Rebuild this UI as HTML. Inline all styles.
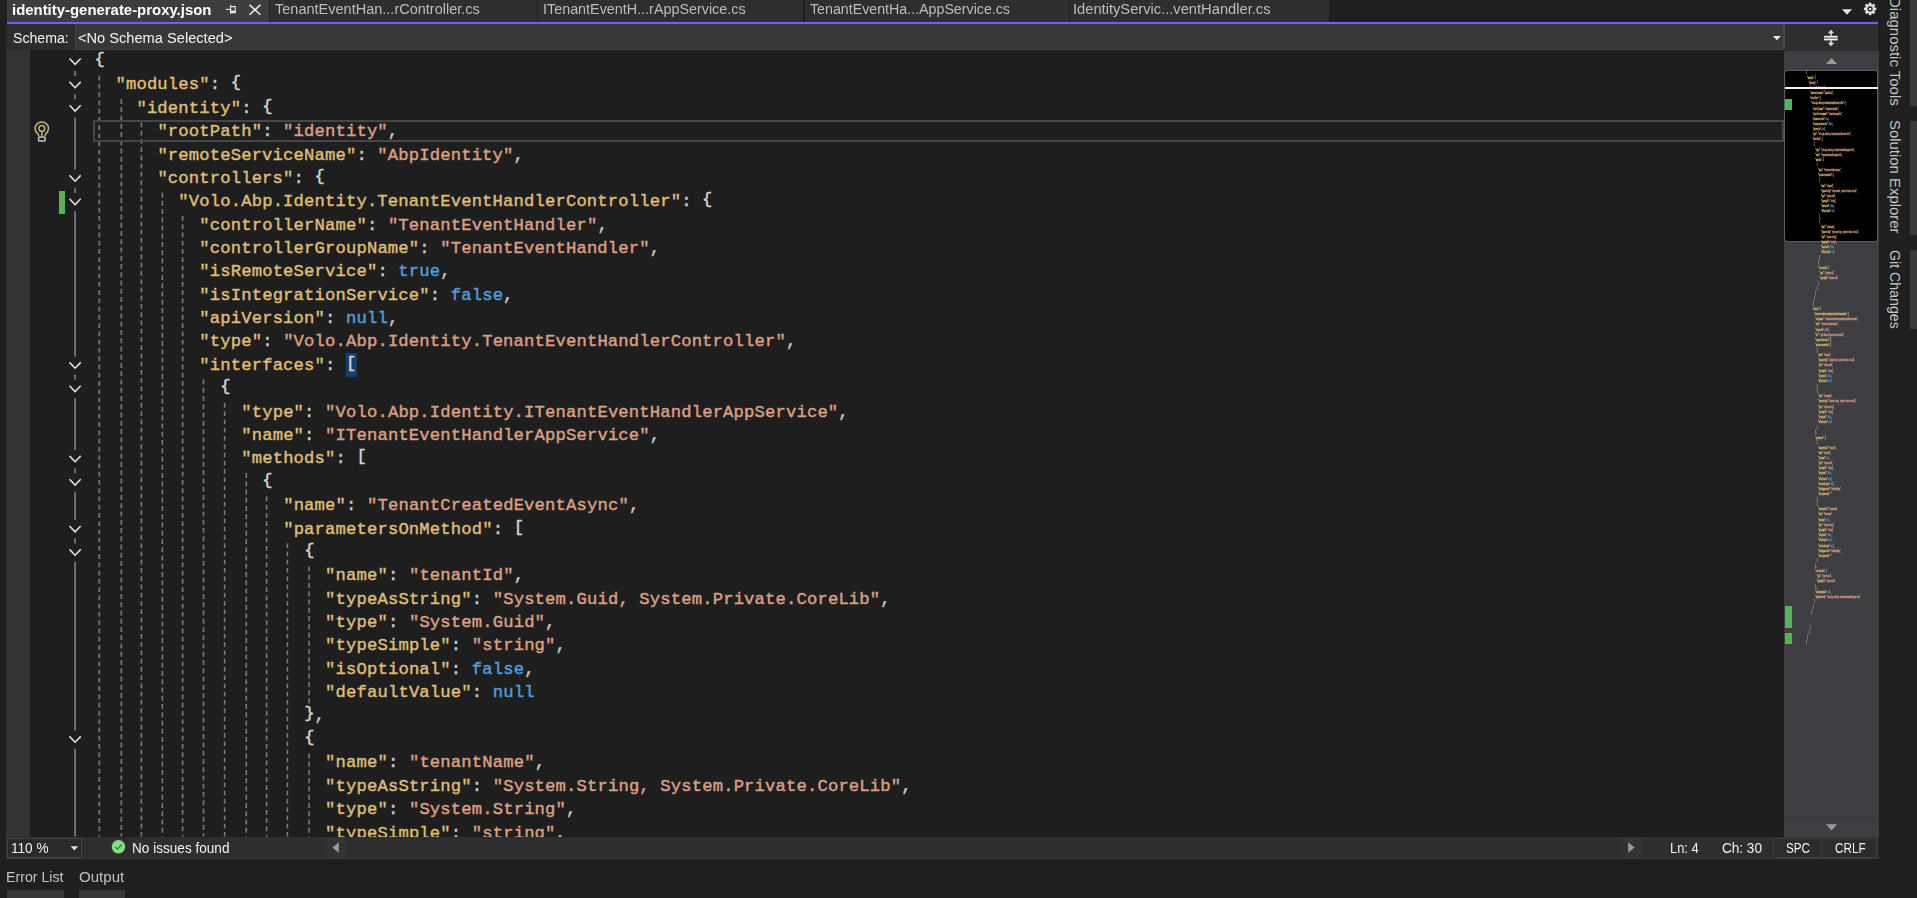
<!DOCTYPE html>
<html lang="en"><head><meta charset="utf-8">
<title>identity-generate-proxy.json - Microsoft Visual Studio</title>
<style>
html,body{margin:0;padding:0;background:#1f1f1f;}
body{width:1917px;height:898px;position:relative;overflow:hidden;font-family:"Liberation Sans",sans-serif;font-size:15.2px;color:#f0f0f0;}
.a{position:absolute;}
.t{position:absolute;white-space:pre;line-height:20px;height:20px;}
.code{position:absolute;left:0;white-space:pre;font-family:"Liberation Mono", monospace;font-size:17.2px;letter-spacing:0.16032031249999967px;height:23px;line-height:23px;color:#d2d2d2;-webkit-text-stroke:0.45px currentColor;}
.k{color:#ddbb78;}
.s{color:#d99f84;}
.w{color:#559bd8;}
.p{color:#c9c9c9;}
.b{color:#d4d4d4;position:relative;top:-2.3px;}
.bm{background:#123e70;}
.mm{font-family:"Liberation Mono", monospace;font-size:17.2px;letter-spacing:0.16032031249999967px;color:#d2d2d2;white-space:pre;opacity:1.0;-webkit-text-stroke:1.6px currentColor;}
.ml{height:23.375px;line-height:23.375px;}
svg{position:absolute;overflow:visible;}
.vt{position:absolute;white-space:pre;line-height:20px;height:20px;transform-origin:0 0;transform:rotate(90deg);color:#c6c6c6;}
</style></head><body>
<div class="a" style="left:6.90px;top:0.00px;width:1322.60px;height:22.00px;background:#2e2e2e;"></div>
<div class="a" style="left:6.90px;top:0.00px;width:262.10px;height:22.00px;background:#3d3d3d;"></div>
<div class="a" style="left:269.00px;top:0.00px;width:1.20px;height:22.00px;background:#1f1f1f;"></div>
<div class="a" style="left:537.00px;top:0.00px;width:1.20px;height:22.00px;background:#1f1f1f;"></div>
<div class="a" style="left:803.40px;top:0.00px;width:1.20px;height:22.00px;background:#1f1f1f;"></div>
<div class="a" style="left:1069.00px;top:0.00px;width:1.20px;height:22.00px;background:#1f1f1f;"></div>
<div class="a" style="left:6.90px;top:21.70px;width:1871.40px;height:2.60px;background:#7160e8;"></div>
<span class="t" id="tab1" style="left:12.31px;top:0.40px;color:#ffffff;font-size:15.3px;transform-origin:0 0;transform:scaleX(0.9749);font-weight:bold;">identity-generate-proxy.json</span>
<span class="t" id="tab2" style="left:275.18px;top:-1.37px;color:#bdbdbd;font-size:15.2px;transform-origin:0 0;transform:scaleX(0.9554);">TenantEventHan...rController.cs</span>
<span class="t" id="tab3" style="left:542.96px;top:-1.37px;color:#bdbdbd;font-size:15.2px;transform-origin:0 0;transform:scaleX(0.9450);">ITenantEventH...rAppService.cs</span>
<span class="t" id="tab4" style="left:810.36px;top:-1.37px;color:#bdbdbd;font-size:15.2px;transform-origin:0 0;transform:scaleX(0.9363);">TenantEventHa...AppService.cs</span>
<span class="t" id="tab5" style="left:1073.23px;top:-1.37px;color:#bdbdbd;font-size:15.2px;transform-origin:0 0;transform:scaleX(0.9667);">IdentityServic...ventHandler.cs</span>
<svg style="left:225px;top:3px" width="14" height="14" viewBox="0 0 14 14"><g fill="none" stroke="#e6e6e6" stroke-width="1.1">
<path d="M0.8 6.4H5.4"/><path d="M5.6 1.7V11"/><path d="M6 3.6H10.3V9.6H6"/><path d="M6 8.6H10.3" stroke-width="2"/></g></svg>
<svg style="left:249px;top:4px" width="12" height="12" viewBox="0 0 12 12"><path d="M0.5 0.9L11.4 10.7M11.4 0.9L0.5 10.7" fill="none" stroke="#ececec" stroke-width="1.5"/></svg>
<svg style="left:1842px;top:9px" width="10" height="6" viewBox="0 0 10 6"><g transform="translate(0.00 0.20)"><path d="M0 0H10L5 5.6Z" fill="#e4e4e4"/></g></svg>
<svg style="left:1870px;top:8px" width="1" height="1"><g transform="translate(0.10 0.90)"><g fill="#e4e4e4"><rect x="-1.35" y="-6.2" width="2.7" height="3" transform="rotate(0)"/><rect x="-1.35" y="-6.2" width="2.7" height="3" transform="rotate(45)"/><rect x="-1.35" y="-6.2" width="2.7" height="3" transform="rotate(90)"/><rect x="-1.35" y="-6.2" width="2.7" height="3" transform="rotate(135)"/><rect x="-1.35" y="-6.2" width="2.7" height="3" transform="rotate(180)"/><rect x="-1.35" y="-6.2" width="2.7" height="3" transform="rotate(225)"/><rect x="-1.35" y="-6.2" width="2.7" height="3" transform="rotate(270)"/><rect x="-1.35" y="-6.2" width="2.7" height="3" transform="rotate(315)"/><path fill-rule="evenodd" d="M0 -4.6A4.6 4.6 0 1 1 0 4.6A4.6 4.6 0 1 1 0 -4.6ZM0 -2.6A2.6 2.6 0 1 0 0 2.6A2.6 2.6 0 1 0 0 -2.6Z"/><circle r="1.25"/></g></g></svg>
<div class="a" style="left:6.30px;top:24.30px;width:1778.30px;height:25.70px;background:#2c2c2c;"></div>
<div class="a" style="left:75.00px;top:24.30px;width:1710.00px;height:25.70px;background:#383838;box-sizing:border-box;border:1px solid #434343;border-top:none;border-right:2px solid #464646;"></div>
<span class="t" id="schema" style="left:13.03px;top:27.63px;color:#f2f2f2;font-size:15.2px;transform-origin:0 0;transform:scaleX(0.9310);">Schema:</span>
<span class="t" id="noschema" style="left:78.25px;top:27.63px;color:#f2f2f2;font-size:15.2px;transform-origin:0 0;transform:scaleX(0.9628);">&lt;No Schema Selected&gt;</span>
<svg style="left:1772px;top:35px" width="8" height="5" viewBox="0 0 8 5"><g transform="translate(0.90 0.90)"><path d="M0 0H8L4 4.4Z" fill="#e8e8e8"/></g></svg>
<div class="a" style="left:1785.00px;top:24.30px;width:93.20px;height:26.40px;background:#2e2e2e;"></div>
<svg style="left:1823px;top:29px" width="15" height="17" viewBox="0 0 15 17"><g transform="translate(0.50 0.60)">
<path d="M7.5 0.2L10.7 3.6H8.3V6.2H6.7V3.6H4.3Z" fill="#dcdcdc"/>
<path d="M7.5 16.6L10.7 13.2H8.3V10.6H6.7V13.2H4.3Z" fill="#dcdcdc"/>
<rect x="0.5" y="6.3" width="13.6" height="4.4" fill="#8a8a8a"/>
<rect x="0.5" y="6.3" width="13.6" height="1.3" fill="#f0f0f0"/><rect x="0.5" y="9.4" width="13.6" height="1.3" fill="#f0f0f0"/></g></svg>
<div class="a" style="left:6.30px;top:50.00px;width:1778.30px;height:786.60px;background:#1e1e1e;"></div>
<div class="a" style="left:6.30px;top:50.00px;width:23.80px;height:786.60px;background:#333333;"></div>
<svg style="left:0;top:0" width="1917" height="898"><g fill="none" stroke="#7a7a7a" stroke-width="1.6" stroke-dasharray="4.9 3.3499999999999996"><path d="M99.30 75.67V836.60"/><path d="M121.30 99.05V836.60"/><path d="M141.40 122.42V836.60"/><path d="M162.40 192.55V836.60"/><path d="M182.60 215.93V836.60"/><path d="M203.50 379.55V836.60"/><path d="M224.60 402.93V836.60"/><path d="M246.30 473.05V836.60"/><path d="M266.60 496.43V836.60"/><path d="M287.40 543.17V836.60"/><path d="M309.10 566.55V704.60"/><path d="M309.10 753.55V836.60"/></g></svg>
<div class="a" style="left:93.00px;top:119.80px;width:1691.20px;height:22.10px;background:transparent;box-sizing:border-box;border:2.4px solid #464646;"></div>
<svg style="left:0;top:0" width="1917" height="898"><g fill="none"><path d="M69.50 58.50L75.10 64.30L80.70 58.50" stroke="#e4e4e4" stroke-width="1.5"/><path d="M69.50 81.88L75.10 87.67L80.70 81.88" stroke="#e4e4e4" stroke-width="1.5"/><path d="M75.10 70.90V75.98" stroke="#7c7c7c" stroke-width="1.7"/><path d="M69.50 105.25L75.10 111.05L80.70 105.25" stroke="#e4e4e4" stroke-width="1.5"/><path d="M75.10 94.28V99.35" stroke="#7c7c7c" stroke-width="1.7"/><path d="M69.50 175.38L75.10 181.18L80.70 175.38" stroke="#e4e4e4" stroke-width="1.5"/><path d="M75.10 117.65V169.48" stroke="#7c7c7c" stroke-width="1.7"/><path d="M69.50 198.75L75.10 204.55L80.70 198.75" stroke="#e4e4e4" stroke-width="1.5"/><path d="M75.10 187.78V192.85" stroke="#7c7c7c" stroke-width="1.7"/><path d="M69.50 362.38L75.10 368.18L80.70 362.38" stroke="#e4e4e4" stroke-width="1.5"/><path d="M75.10 211.15V356.47" stroke="#7c7c7c" stroke-width="1.7"/><path d="M69.50 385.75L75.10 391.55L80.70 385.75" stroke="#e4e4e4" stroke-width="1.5"/><path d="M75.10 374.77V379.85" stroke="#7c7c7c" stroke-width="1.7"/><path d="M69.50 455.88L75.10 461.68L80.70 455.88" stroke="#e4e4e4" stroke-width="1.5"/><path d="M75.10 398.15V449.97" stroke="#7c7c7c" stroke-width="1.7"/><path d="M69.50 479.25L75.10 485.05L80.70 479.25" stroke="#e4e4e4" stroke-width="1.5"/><path d="M75.10 468.27V473.35" stroke="#7c7c7c" stroke-width="1.7"/><path d="M69.50 526.00L75.10 531.80L80.70 526.00" stroke="#e4e4e4" stroke-width="1.5"/><path d="M75.10 491.65V520.10" stroke="#7c7c7c" stroke-width="1.7"/><path d="M69.50 549.37L75.10 555.17L80.70 549.37" stroke="#e4e4e4" stroke-width="1.5"/><path d="M75.10 538.40V543.47" stroke="#7c7c7c" stroke-width="1.7"/><path d="M69.50 736.37L75.10 742.17L80.70 736.37" stroke="#e4e4e4" stroke-width="1.5"/><path d="M75.10 561.77V730.47" stroke="#7c7c7c" stroke-width="1.7"/><path d="M75.10 748.77V836.60" stroke="#7c7c7c" stroke-width="1.7"/></g></svg>
<div class="a" style="left:59.00px;top:191.00px;width:6.00px;height:23.00px;background:#57b35a;"></div>
<svg style="left:33px;top:119px" width="18" height="24" viewBox="0 0 18 24"><g fill="none" stroke-width="1.5">
<path d="M5.6 17.2V15.8C3.3 13.8 2.1 11.8 2.1 9.5A6.7 6.5 0 0 1 15.5 9.5C15.5 11.8 14.3 13.8 12 15.8V17.2" stroke="#c5ad72"/>
<circle cx="8.8" cy="9.4" r="2.9" stroke="#c5ad72"/><path d="M8.8 12.3V17.2" stroke="#c5ad72"/>
<rect x="5.6" y="17.9" width="6.5" height="4.2" rx="0.8" stroke="#c4c4c4"/></g></svg>
<div class="a" style="left:345.90px;top:353.10px;width:11.00px;height:23.70px;background:#123e70;"></div>
<div class="code" id="L1" style="top:50px;padding-left:94.50px;"><span class="b">{</span></div>
<div class="code" id="L2" style="top:73px;padding-left:115.46px;"><span class="k">"modules"</span><span class="p">:</span> <span class="b">{</span></div>
<div class="code" id="L3" style="top:97px;padding-left:136.43px;"><span class="k">"identity"</span><span class="p">:</span> <span class="b">{</span></div>
<div class="code" id="L4" style="top:120px;padding-left:157.39px;"><span class="k">"rootPath"</span><span class="p">:</span> <span class="s">"identity"</span><span class="p">,</span></div>
<div class="code" id="L5" style="top:144px;padding-left:157.39px;"><span class="k">"remoteServiceName"</span><span class="p">:</span> <span class="s">"AbpIdentity"</span><span class="p">,</span></div>
<div class="code" id="L6" style="top:167px;padding-left:157.39px;"><span class="k">"controllers"</span><span class="p">:</span> <span class="b">{</span></div>
<div class="code" id="L7" style="top:190px;padding-left:178.36px;"><span class="k">"Volo.Abp.Identity.TenantEventHandlerController"</span><span class="p">:</span> <span class="b">{</span></div>
<div class="code" id="L8" style="top:214px;padding-left:199.32px;"><span class="k">"controllerName"</span><span class="p">:</span> <span class="s">"TenantEventHandler"</span><span class="p">,</span></div>
<div class="code" id="L9" style="top:237px;padding-left:199.32px;"><span class="k">"controllerGroupName"</span><span class="p">:</span> <span class="s">"TenantEventHandler"</span><span class="p">,</span></div>
<div class="code" id="L10" style="top:260px;padding-left:199.32px;"><span class="k">"isRemoteService"</span><span class="p">:</span> <span class="w">true</span><span class="p">,</span></div>
<div class="code" id="L11" style="top:284px;padding-left:199.32px;"><span class="k">"isIntegrationService"</span><span class="p">:</span> <span class="w">false</span><span class="p">,</span></div>
<div class="code" id="L12" style="top:307px;padding-left:199.32px;"><span class="k">"apiVersion"</span><span class="p">:</span> <span class="w">null</span><span class="p">,</span></div>
<div class="code" id="L13" style="top:330px;padding-left:199.32px;"><span class="k">"type"</span><span class="p">:</span> <span class="s">"Volo.Abp.Identity.TenantEventHandlerController"</span><span class="p">,</span></div>
<div class="code" id="L14" style="top:354px;padding-left:199.32px;"><span class="k">"interfaces"</span><span class="p">:</span> <span class="b">[</span></div>
<div class="code" id="L15" style="top:377px;padding-left:220.28px;"><span class="b">{</span></div>
<div class="code" id="L16" style="top:401px;padding-left:241.25px;"><span class="k">"type"</span><span class="p">:</span> <span class="s">"Volo.Abp.Identity.ITenantEventHandlerAppService"</span><span class="p">,</span></div>
<div class="code" id="L17" style="top:424px;padding-left:241.25px;"><span class="k">"name"</span><span class="p">:</span> <span class="s">"ITenantEventHandlerAppService"</span><span class="p">,</span></div>
<div class="code" id="L18" style="top:447px;padding-left:241.25px;"><span class="k">"methods"</span><span class="p">:</span> <span class="b">[</span></div>
<div class="code" id="L19" style="top:471px;padding-left:262.21px;"><span class="b">{</span></div>
<div class="code" id="L20" style="top:494px;padding-left:283.18px;"><span class="k">"name"</span><span class="p">:</span> <span class="s">"TenantCreatedEventAsync"</span><span class="p">,</span></div>
<div class="code" id="L21" style="top:518px;padding-left:283.18px;"><span class="k">"parametersOnMethod"</span><span class="p">:</span> <span class="b">[</span></div>
<div class="code" id="L22" style="top:541px;padding-left:304.14px;"><span class="b">{</span></div>
<div class="code" id="L23" style="top:564px;padding-left:325.10px;"><span class="k">"name"</span><span class="p">:</span> <span class="s">"tenantId"</span><span class="p">,</span></div>
<div class="code" id="L24" style="top:588px;padding-left:325.10px;"><span class="k">"typeAsString"</span><span class="p">:</span> <span class="s">"System.Guid, System.Private.CoreLib"</span><span class="p">,</span></div>
<div class="code" id="L25" style="top:611px;padding-left:325.10px;"><span class="k">"type"</span><span class="p">:</span> <span class="s">"System.Guid"</span><span class="p">,</span></div>
<div class="code" id="L26" style="top:634px;padding-left:325.10px;"><span class="k">"typeSimple"</span><span class="p">:</span> <span class="s">"string"</span><span class="p">,</span></div>
<div class="code" id="L27" style="top:658px;padding-left:325.10px;"><span class="k">"isOptional"</span><span class="p">:</span> <span class="w">false</span><span class="p">,</span></div>
<div class="code" id="L28" style="top:681px;padding-left:325.10px;"><span class="k">"defaultValue"</span><span class="p">:</span> <span class="w">null</span></div>
<div class="code" id="L29" style="top:704px;padding-left:304.14px;"><span class="b">}</span><span class="p">,</span></div>
<div class="code" id="L30" style="top:728px;padding-left:304.14px;"><span class="b">{</span></div>
<div class="code" id="L31" style="top:751px;padding-left:325.10px;"><span class="k">"name"</span><span class="p">:</span> <span class="s">"tenantName"</span><span class="p">,</span></div>
<div class="code" id="L32" style="top:775px;padding-left:325.10px;"><span class="k">"typeAsString"</span><span class="p">:</span> <span class="s">"System.String, System.Private.CoreLib"</span><span class="p">,</span></div>
<div class="code" id="L33" style="top:798px;padding-left:325.10px;"><span class="k">"type"</span><span class="p">:</span> <span class="s">"System.String"</span><span class="p">,</span></div>
<div class="code" id="L34" style="top:822px;padding-left:325.10px;"><span class="k">"typeSimple"</span><span class="p">:</span> <span class="s">"string"</span><span class="p">,</span></div>
<div class="a" style="left:1784.20px;top:50.70px;width:94.50px;height:785.90px;background:#3e3e42;"></div>
<svg style="left:1825px;top:57px" width="12" height="7" viewBox="0 0 12 7"><g transform="translate(0.80 0.90)"><path d="M0 6.2H11.4L5.7 0Z" fill="#999999"/></g></svg>
<svg style="left:1825px;top:824px" width="12" height="7" viewBox="0 0 12 7"><g transform="translate(0.80 0.20)"><path d="M0 0H11.4L5.7 6.2Z" fill="#999999"/></g></svg>
<div class="a" style="left:1784.20px;top:817.00px;width:94.50px;height:1.00px;background:#35353a;"></div>
<div class="a" style="left:1784.30px;top:70.10px;width:93.80px;height:171.80px;background:#000000;box-sizing:border-box;border:1px solid #5e5e5e;border-radius:3.5px;"></div>
<div class="a" style="left:1784.20px;top:50px;width:94.50px;height:770px;overflow:hidden;filter:blur(0.55px);"><div class="a mm" style="left:21.80px;top:19.62px;transform-origin:0 0;transform:scale(0.06487,0.21989);"><div class="ml"><span class="b">{</span></div><div class="ml">  <span class="k">"modules"</span><span class="p">:</span> <span class="b">{</span></div><div class="ml">    <span class="k">"identity"</span><span class="p">:</span> <span class="b">{</span></div><div class="ml">      <span class="k">"rootPath"</span><span class="p">:</span> <span class="s">"identity"</span><span class="p">,</span></div><div class="ml">      <span class="k">"remoteServiceName"</span><span class="p">:</span> <span class="s">"AbpIdentity"</span><span class="p">,</span></div><div class="ml">      <span class="k">"controllers"</span><span class="p">:</span> <span class="b">{</span></div><div class="ml">        <span class="k">"Volo.Abp.Identity.TenantEventHandlerController"</span><span class="p">:</span> <span class="b">{</span></div><div class="ml">          <span class="k">"controllerName"</span><span class="p">:</span> <span class="s">"TenantEventHandler"</span><span class="p">,</span></div><div class="ml">          <span class="k">"controllerGroupName"</span><span class="p">:</span> <span class="s">"TenantEventHandler"</span><span class="p">,</span></div><div class="ml">          <span class="k">"isRemoteService"</span><span class="p">:</span> <span class="w">true</span><span class="p">,</span></div><div class="ml">          <span class="k">"isIntegrationService"</span><span class="p">:</span> <span class="w">false</span><span class="p">,</span></div><div class="ml">          <span class="k">"apiVersion"</span><span class="p">:</span> <span class="w">null</span><span class="p">,</span></div><div class="ml">          <span class="k">"type"</span><span class="p">:</span> <span class="s">"Volo.Abp.Identity.TenantEventHandlerController"</span><span class="p">,</span></div><div class="ml">          <span class="k">"interfaces"</span><span class="p">:</span> <span class="b">[</span></div><div class="ml">            <span class="b">{</span></div><div class="ml">              <span class="k">"type"</span><span class="p">:</span> <span class="s">"Volo.Abp.Identity.ITenantEventHandlerAppService"</span><span class="p">,</span></div><div class="ml">              <span class="k">"name"</span><span class="p">:</span> <span class="s">"ITenantEventHandlerAppService"</span><span class="p">,</span></div><div class="ml">              <span class="k">"methods"</span><span class="p">:</span> <span class="b">[</span></div><div class="ml">                <span class="b">{</span></div><div class="ml">                  <span class="k">"name"</span><span class="p">:</span> <span class="s">"TenantCreatedEventAsync"</span><span class="p">,</span></div><div class="ml">                  <span class="k">"parametersOnMethod"</span><span class="p">:</span> <span class="b">[</span></div><div class="ml">                    <span class="b">{</span></div><div class="ml">                      <span class="k">"name"</span><span class="p">:</span> <span class="s">"tenantId"</span><span class="p">,</span></div><div class="ml">                      <span class="k">"typeAsString"</span><span class="p">:</span> <span class="s">"System.Guid, System.Private.CoreLib"</span><span class="p">,</span></div><div class="ml">                      <span class="k">"type"</span><span class="p">:</span> <span class="s">"System.Guid"</span><span class="p">,</span></div><div class="ml">                      <span class="k">"typeSimple"</span><span class="p">:</span> <span class="s">"string"</span><span class="p">,</span></div><div class="ml">                      <span class="k">"isOptional"</span><span class="p">:</span> <span class="w">false</span><span class="p">,</span></div><div class="ml">                      <span class="k">"defaultValue"</span><span class="p">:</span> <span class="w">null</span></div><div class="ml">                    <span class="b">}</span><span class="p">,</span></div><div class="ml">                    <span class="b">{</span></div><div class="ml">                      <span class="k">"name"</span><span class="p">:</span> <span class="s">"tenantName"</span><span class="p">,</span></div><div class="ml">                      <span class="k">"typeAsString"</span><span class="p">:</span> <span class="s">"System.String, System.Private.CoreLib"</span><span class="p">,</span></div><div class="ml">                      <span class="k">"type"</span><span class="p">:</span> <span class="s">"System.String"</span><span class="p">,</span></div><div class="ml">                      <span class="k">"typeSimple"</span><span class="p">:</span> <span class="s">"string"</span><span class="p">,</span></div><div class="ml">                      <span class="k">"isOptional"</span><span class="p">:</span> <span class="w">false</span><span class="p">,</span></div><div class="ml">                      <span class="k">"defaultValue"</span><span class="p">:</span> <span class="w">null</span></div><div class="ml">                    <span class="b">}</span></div><div class="ml">                  <span class="b">]</span><span class="p">,</span></div><div class="ml">                  <span class="k">"returnValue"</span><span class="p">:</span> <span class="b">{</span></div><div class="ml">                    <span class="k">"type"</span><span class="p">:</span> <span class="s">"System.Void"</span><span class="p">,</span></div><div class="ml">                    <span class="k">"typeSimple"</span><span class="p">:</span> <span class="s">"System.Void"</span></div><div class="ml">                  <span class="b">}</span></div><div class="ml">                <span class="b">}</span></div><div class="ml">              <span class="b">]</span></div><div class="ml">            <span class="b">}</span></div><div class="ml">          <span class="b">]</span><span class="p">,</span></div><div class="ml">          <span class="k">"actions"</span><span class="p">:</span> <span class="b">{</span></div><div class="ml">            <span class="k">"TenantCreatedEventAsyncByTenantIdAndTenantName"</span><span class="p">:</span> <span class="b">{</span></div><div class="ml">              <span class="k">"uniqueName"</span><span class="p">:</span> <span class="s">"TenantCreatedEventAsyncByTenantIdAndTenantName"</span><span class="p">,</span></div><div class="ml">              <span class="k">"name"</span><span class="p">:</span> <span class="s">"TenantCreatedEventAsync"</span><span class="p">,</span></div><div class="ml">              <span class="k">"httpMethod"</span><span class="p">:</span> <span class="s">"POST"</span><span class="p">,</span></div><div class="ml">              <span class="k">"url"</span><span class="p">:</span> <span class="s">"api/identity/tenant-event-handler"</span><span class="p">,</span></div><div class="ml">              <span class="k">"supportedVersions"</span><span class="p">:</span> <span class="b">[</span><span class="b">]</span><span class="p">,</span></div><div class="ml">              <span class="k">"parametersOnMethod"</span><span class="p">:</span> <span class="b">[</span></div><div class="ml">                <span class="b">{</span></div><div class="ml">                  <span class="k">"name"</span><span class="p">:</span> <span class="s">"tenantId"</span><span class="p">,</span></div><div class="ml">                  <span class="k">"typeAsString"</span><span class="p">:</span> <span class="s">"System.Guid, System.Private.CoreLib"</span><span class="p">,</span></div><div class="ml">                  <span class="k">"type"</span><span class="p">:</span> <span class="s">"System.Guid"</span><span class="p">,</span></div><div class="ml">                  <span class="k">"typeSimple"</span><span class="p">:</span> <span class="s">"string"</span><span class="p">,</span></div><div class="ml">                  <span class="k">"isOptional"</span><span class="p">:</span> <span class="w">false</span><span class="p">,</span></div><div class="ml">                  <span class="k">"defaultValue"</span><span class="p">:</span> <span class="w">null</span></div><div class="ml">                <span class="b">}</span><span class="p">,</span></div><div class="ml">                <span class="b">{</span></div><div class="ml">                  <span class="k">"name"</span><span class="p">:</span> <span class="s">"tenantName"</span><span class="p">,</span></div><div class="ml">                  <span class="k">"typeAsString"</span><span class="p">:</span> <span class="s">"System.String, System.Private.CoreLib"</span><span class="p">,</span></div><div class="ml">                  <span class="k">"type"</span><span class="p">:</span> <span class="s">"System.String"</span><span class="p">,</span></div><div class="ml">                  <span class="k">"typeSimple"</span><span class="p">:</span> <span class="s">"string"</span><span class="p">,</span></div><div class="ml">                  <span class="k">"isOptional"</span><span class="p">:</span> <span class="w">false</span><span class="p">,</span></div><div class="ml">                  <span class="k">"defaultValue"</span><span class="p">:</span> <span class="w">null</span></div><div class="ml">                <span class="b">}</span></div><div class="ml">              <span class="b">]</span><span class="p">,</span></div><div class="ml">              <span class="k">"parameters"</span><span class="p">:</span> <span class="b">[</span></div><div class="ml">                <span class="b">{</span></div><div class="ml">                  <span class="k">"nameOnMethod"</span><span class="p">:</span> <span class="s">"tenantId"</span><span class="p">,</span></div><div class="ml">                  <span class="k">"name"</span><span class="p">:</span> <span class="s">"tenantId"</span><span class="p">,</span></div><div class="ml">                  <span class="k">"jsonName"</span><span class="p">:</span> <span class="w">null</span><span class="p">,</span></div><div class="ml">                  <span class="k">"type"</span><span class="p">:</span> <span class="s">"System.Guid"</span><span class="p">,</span></div><div class="ml">                  <span class="k">"typeSimple"</span><span class="p">:</span> <span class="s">"string"</span><span class="p">,</span></div><div class="ml">                  <span class="k">"isOptional"</span><span class="p">:</span> <span class="w">false</span><span class="p">,</span></div><div class="ml">                  <span class="k">"defaultValue"</span><span class="p">:</span> <span class="w">null</span><span class="p">,</span></div><div class="ml">                  <span class="k">"constraintTypes"</span><span class="p">:</span> <span class="w">null</span><span class="p">,</span></div><div class="ml">                  <span class="k">"bindingSourceId"</span><span class="p">:</span> <span class="s">"ModelBinding"</span><span class="p">,</span></div><div class="ml">                  <span class="k">"descriptorName"</span><span class="p">:</span> <span class="s">""</span></div><div class="ml">                <span class="b">}</span><span class="p">,</span></div><div class="ml">                <span class="b">{</span></div><div class="ml">                  <span class="k">"nameOnMethod"</span><span class="p">:</span> <span class="s">"tenantName"</span><span class="p">,</span></div><div class="ml">                  <span class="k">"name"</span><span class="p">:</span> <span class="s">"tenantName"</span><span class="p">,</span></div><div class="ml">                  <span class="k">"jsonName"</span><span class="p">:</span> <span class="w">null</span><span class="p">,</span></div><div class="ml">                  <span class="k">"type"</span><span class="p">:</span> <span class="s">"System.String"</span><span class="p">,</span></div><div class="ml">                  <span class="k">"typeSimple"</span><span class="p">:</span> <span class="s">"string"</span><span class="p">,</span></div><div class="ml">                  <span class="k">"isOptional"</span><span class="p">:</span> <span class="w">false</span><span class="p">,</span></div><div class="ml">                  <span class="k">"defaultValue"</span><span class="p">:</span> <span class="w">null</span><span class="p">,</span></div><div class="ml">                  <span class="k">"constraintTypes"</span><span class="p">:</span> <span class="w">null</span><span class="p">,</span></div><div class="ml">                  <span class="k">"bindingSourceId"</span><span class="p">:</span> <span class="s">"ModelBinding"</span><span class="p">,</span></div><div class="ml">                  <span class="k">"descriptorName"</span><span class="p">:</span> <span class="s">""</span></div><div class="ml">                <span class="b">}</span></div><div class="ml">              <span class="b">]</span><span class="p">,</span></div><div class="ml">              <span class="k">"returnValue"</span><span class="p">:</span> <span class="b">{</span></div><div class="ml">                <span class="k">"type"</span><span class="p">:</span> <span class="s">"System.Void"</span><span class="p">,</span></div><div class="ml">                <span class="k">"typeSimple"</span><span class="p">:</span> <span class="s">"System.Void"</span></div><div class="ml">              <span class="b">}</span><span class="p">,</span></div><div class="ml">              <span class="k">"allowAnonymous"</span><span class="p">:</span> <span class="w">null</span><span class="p">,</span></div><div class="ml">              <span class="k">"implementFrom"</span><span class="p">:</span> <span class="s">"Volo.Abp.Identity.ITenantEventHandlerAppService"</span></div><div class="ml">            <span class="b">}</span></div><div class="ml">          <span class="b">}</span></div><div class="ml">        <span class="b">}</span></div><div class="ml"></div><div class="ml"></div><div class="ml">      <span class="b">}</span></div><div class="ml">    <span class="b">}</span></div><div class="ml">  <span class="b">}</span></div><div class="ml"><span class="b">}</span></div></div></div>
<div class="a" style="left:1784.70px;top:86.50px;width:93.80px;height:2.40px;background:#f2f2f2;"></div>
<div class="a" style="left:1784.80px;top:98.90px;width:7.10px;height:11.10px;background:#57b35a;"></div>
<div class="a" style="left:1784.80px;top:606.00px;width:7.10px;height:21.70px;background:#57b35a;"></div>
<div class="a" style="left:1784.80px;top:632.60px;width:7.10px;height:11.40px;background:#57b35a;"></div>
<div class="a" style="left:6.30px;top:836.60px;width:1872.40px;height:22.00px;background:#2e2e2e;box-sizing:border-box;border-bottom:1px solid #3a3a3a;"></div>
<div class="a" style="left:7.20px;top:837.60px;width:74.50px;height:20.20px;background:#2a2a2a;box-sizing:border-box;border:1px solid #434343;"></div>
<span class="t" id="zoom" style="left:10.69px;top:837.93px;color:#f2f2f2;font-size:15.2px;transform-origin:0 0;transform:scaleX(0.8958);">110 %</span>
<svg style="left:70px;top:846px" width="8" height="5" viewBox="0 0 8 5"><g transform="translate(0.60 0.20)"><path d="M0 0H7.6L3.8 4.2Z" fill="#e0e0e0"/></g></svg>
<svg style="left:118px;top:846px" width="1" height="1"><g transform="translate(0.47 0.83)"><circle cx="0" cy="0" r="6.75" fill="#84dc86"/>
<path d="M-3.44 0.16L-1.1 2.2L3.29 -2.35" fill="none" stroke="#3b8443" stroke-width="1.3"/></g></svg>
<span class="t" id="noissues" style="left:131.88px;top:837.93px;color:#f2f2f2;font-size:15.2px;transform-origin:0 0;transform:scaleX(0.8950);">No issues found</span>
<div class="a" style="left:325.00px;top:836.80px;width:20.80px;height:21.00px;background:#333333;"></div>
<div class="a" style="left:1621.20px;top:836.80px;width:20.80px;height:21.00px;background:#333333;"></div>
<svg style="left:332px;top:842px" width="7" height="11" viewBox="0 0 7 11"><g transform="translate(0.40 0.20)"><path d="M6.4 0V10.6L0 5.3Z" fill="#999999"/></g></svg>
<svg style="left:1628px;top:842px" width="7" height="11" viewBox="0 0 7 11"><g transform="translate(0.20 0.20)"><path d="M0 0V10.6L6.4 5.3Z" fill="#999999"/></g></svg>
<span class="t" id="ln" style="left:1669.68px;top:837.93px;color:#f2f2f2;font-size:15.2px;transform-origin:0 0;transform:scaleX(0.8502);">Ln: 4</span>
<span class="t" id="ch" style="left:1722.00px;top:837.93px;color:#f2f2f2;font-size:15.2px;transform-origin:0 0;transform:scaleX(0.8922);">Ch: 30</span>
<div class="a" style="left:1773.20px;top:837.60px;width:47.60px;height:20.40px;background:#2c2c2c;box-sizing:border-box;border:1px solid #3d3d3d;"></div>
<div class="a" style="left:1822.40px;top:837.60px;width:54.80px;height:20.40px;background:#2c2c2c;box-sizing:border-box;border:1px solid #3d3d3d;"></div>
<span class="t" id="spc" style="left:1785.85px;top:837.93px;color:#f2f2f2;font-size:15.2px;transform-origin:0 0;transform:scaleX(0.7680);">SPC</span>
<span class="t" id="crlf" style="left:1834.85px;top:837.93px;color:#f2f2f2;font-size:15.2px;transform-origin:0 0;transform:scaleX(0.7701);">CRLF</span>
<span class="t" id="errlist" style="left:5.64px;top:866.53px;color:#c2c2c2;font-size:15.2px;transform-origin:0 0;transform:scaleX(0.9334);">Error List</span>
<span class="t" id="output" style="left:78.99px;top:866.53px;color:#c2c2c2;font-size:15.2px;transform-origin:0 0;transform:scaleX(0.9916);">Output</span>
<div class="a" style="left:6.50px;top:890.20px;width:57.50px;height:8.00px;background:#383838;"></div>
<div class="a" style="left:79.20px;top:890.20px;width:45.80px;height:8.00px;background:#383838;"></div>
<span class="vt" id="vt1" style="left:1904.87px;top:-3.10px;color:#c6c6c6;font-size:15.2px;transform:rotate(90deg) scaleX(0.9860);">Diagnostic Tools</span>
<span class="vt" id="vt2" style="left:1904.87px;top:120.23px;color:#c6c6c6;font-size:15.2px;transform:rotate(90deg) scaleX(0.9820);">Solution Explorer</span>
<span class="vt" id="vt3" style="left:1904.87px;top:250.25px;color:#c6c6c6;font-size:15.2px;transform:rotate(90deg) scaleX(0.9336);">Git Changes</span>
<div class="a" style="left:1910.20px;top:-3.00px;width:7.00px;height:108.60px;background:#3a3a3a;"></div>
<div class="a" style="left:1910.20px;top:121.40px;width:7.00px;height:113.20px;background:#3a3a3a;"></div>
<div class="a" style="left:1910.20px;top:249.90px;width:7.00px;height:78.70px;background:#3a3a3a;"></div>
</body></html>
